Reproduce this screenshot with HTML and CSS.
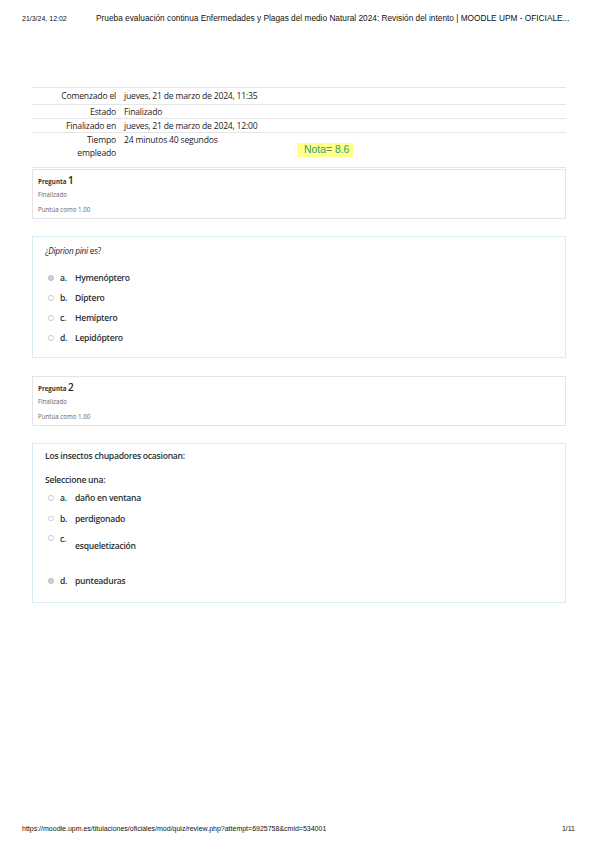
FILE: index.html
```html
<!DOCTYPE html>
<html lang="es">
<head>
<meta charset="utf-8">
<title>Revisión de intento</title>
<link rel="stylesheet" href="styles.css">
</head>
<body>
<header class="print-head">
  <span class="date">21/3/24, 12:02</span>
  <span class="title">Prueba evaluación continua Enfermedades y Plagas del medio Natural 2024: Revisión del intento | MOODLE UPM - OFICIALE...</span>
</header>

<main class="page">
  <div class="summary">
    <div class="row">
      <div class="lbl">Comenzado el</div>
      <div class="val">jueves, 21 de marzo de 2024, 11:35</div>
    </div>
    <div class="row">
      <div class="lbl">Estado</div>
      <div class="val">Finalizado</div>
    </div>
    <div class="row">
      <div class="lbl">Finalizado en</div>
      <div class="val">jueves, 21 de marzo de 2024, 12:00</div>
    </div>
    <div class="row tall">
      <div class="lbl">Tiempo empleado</div>
      <div class="val">24 minutos 40 segundos</div>
      <span class="nota">Nota= 8.6</span>
    </div>
  </div>

  <section class="info">
    <div class="qno">Pregunta <span class="num">1</span></div>
    <div class="meta">Finalizado</div>
    <div class="meta">Puntúa como 1.00</div>
  </section>
  <section class="content q1">
    <p class="qtext">¿<em>Diprion pini</em> es?</p>
    <div class="answers">
      <div class="opt"><span class="radio checked"></span><span class="letter">a.</span><span class="atext">Hymenóptero</span></div>
      <div class="opt"><span class="radio"></span><span class="letter">b.</span><span class="atext">Díptero</span></div>
      <div class="opt"><span class="radio"></span><span class="letter">c.</span><span class="atext">Hemíptero</span></div>
      <div class="opt"><span class="radio"></span><span class="letter">d.</span><span class="atext">Lepidóptero</span></div>
    </div>
  </section>

  <section class="info">
    <div class="qno">Pregunta <span class="num">2</span></div>
    <div class="meta">Finalizado</div>
    <div class="meta">Puntúa como 1.00</div>
  </section>
  <section class="content q2">
    <p class="qtext">Los insectos chupadores ocasionan:</p>
    <p class="prompt">Seleccione una:</p>
    <div class="answers">
      <div class="opt"><span class="radio"></span><span class="letter">a.</span><span class="atext">daño en ventana</span></div>
      <div class="opt"><span class="radio"></span><span class="letter">b.</span><span class="atext">perdigonado</span></div>
      <div class="opt drop"><span class="radio"></span><span class="letter">c.</span><span class="atext">esqueletización</span></div>
      <div class="opt last"><span class="radio checked"></span><span class="letter">d.</span><span class="atext">punteaduras</span></div>
    </div>
  </section>
</main>

<footer class="print-foot">
  <span class="url">https://moodle.upm.es/titulaciones/oficiales/mod/quiz/review.php?attempt=6925758&amp;cmid=534001</span>
  <span class="pg">1/11</span>
</footer>
</body>
</html>
```
FILE: styles.css
```css
html, body {
  margin: 0;
  padding: 0;
  background: #ffffff;
}
body {
  width: 599px;
  height: 848px;
  position: relative;
  font-family: "Open Sans", "Liberation Sans", sans-serif;
  color: #1d2125;
  overflow: hidden;
}
.print-head {
  display: flex;
  align-items: baseline;
  padding: 13px 0 0 22px;
  height: 14px;
  font-family: "Liberation Sans", Arial, sans-serif;
  font-size: 7px;
  line-height: 10px;
  color: #111;
}
.print-head .date {
  width: 74px;
}
.print-head .title {
  font-size: 8.3px;
}
.page {
  padding: 60px 33px 0 32px;
}
.summary {
  border-top: 1px solid #e6e6e6;
  font-size: 8.6px;
  letter-spacing: -0.2px;
  color: #1d2125;
}
.row {
  position: relative;
  display: flex;
  border-bottom: 1px solid #e6e6e6;
  height: 13px;
  align-items: center;
}
.row:first-child { height: 16px; }
.row.tall {
  height: 35px;
  align-items: flex-start;
  line-height: 13px;
  padding-top: 1px;
  box-sizing: border-box;
}
.lbl {
  flex: none;
  width: 84px;
  box-sizing: border-box;
  padding-left: 20px;
  margin-right: 8px;
  text-align: right;
  white-space: nowrap;
}
.row.tall .lbl {
  white-space: normal;
  padding-left: 24px;
}
.val {
  white-space: nowrap;
}
.nota {
  position: absolute;
  left: 265px;
  top: 10px;
  background: #ffff8a;
  color: #2f9d76;
  font-family: "Liberation Sans", Arial, sans-serif;
  font-size: 10.4px;
  letter-spacing: 0;
  line-height: 14px;
  padding: 0 4px 0 7px;
}
.info {
  margin-top: 1px;
  border: 1px solid #e3e3e8;
  height: 50px;
  box-sizing: border-box;
  padding: 3px 0 0 5px;
  font-size: 6.2px;
  color: #666;
}
.content + .info {
  margin-top: 18px;
}
.info .qno {
  font-weight: 700;
  color: #333;
  height: 14px;
  line-height: 14px;
}
.info .num {
  font-size: 10px;
  font-weight: 600;
  color: #222;
}
.info .meta {
  height: 15px;
  line-height: 15px;
}
.content {
  margin-top: 17px;
  border: 1px solid #d3eef2;
  box-sizing: border-box;
  padding: 0 0 0 12px;
  font-size: 8.6px;
  letter-spacing: -0.25px;
}
.content p {
  margin: 0;
}
.q1 {
  height: 122px;
  padding-top: 9px;
}
.q1 .qtext {
  line-height: 10px;
  margin-bottom: 12px;
  font-size: 8.2px;
}
.q2 {
  height: 160px;
  padding-top: 7px;
}
.q2 .qtext {
  line-height: 10px;
  margin-bottom: 14px;
  font-weight: 600;
  color: #2b2f33;
}
.q2 .prompt {
  line-height: 10px;
  margin-bottom: 3px;
  font-weight: 600;
  color: #2b2f33;
}
.answers {
  display: flex;
  flex-direction: column;
  padding-left: 3px;
}
.opt {
  display: flex;
  align-items: center;
  height: 20px;
  color: #2b2f33;
  font-weight: 600;
}
.q2 .opt:nth-child(2) {
  height: 21px;
}
.radio {
  width: 5.5px;
  height: 5.5px;
  border: 0.8px solid #c9c9c9;
  border-radius: 50%;
  box-sizing: border-box;
  margin-right: 6.5px;
}
.radio.checked {
  background: #cfcfcf;
  border-color: #bdbdbd;
}
.letter {
  width: 15px;
}
.q2 .opt.drop {
  align-items: flex-start;
  height: 42px;
  padding-top: 4px;
  box-sizing: border-box;
}
.q2 .opt.drop .radio { margin-top: 2px; }
.q2 .opt.drop .atext { margin-top: 7px; }
.print-foot {
  position: absolute;
  left: 22px;
  right: 24px;
  top: 824px;
  display: flex;
  justify-content: space-between;
  font-family: "Liberation Sans", Arial, sans-serif;
  font-size: 7px;
  line-height: 10px;
  color: #111;
}
```
